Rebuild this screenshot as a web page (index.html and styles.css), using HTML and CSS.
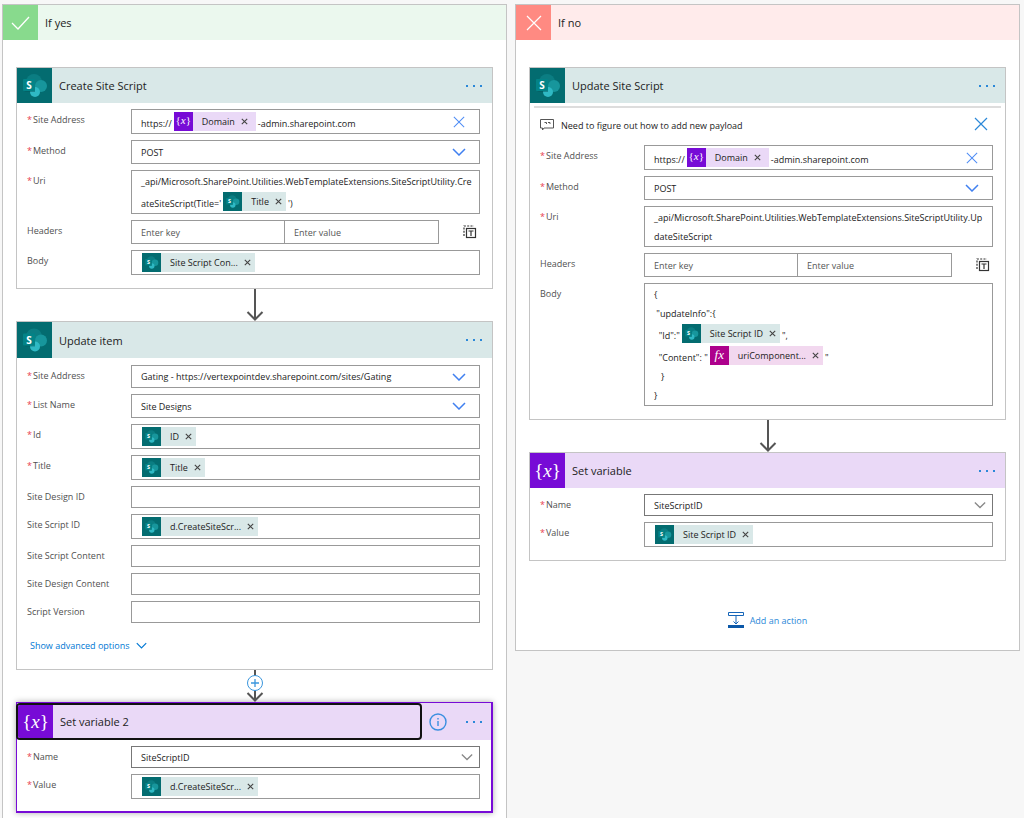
FILE: index.html
```html
<!DOCTYPE html>
<html lang="en">
<head>
<meta charset="utf-8">
<title>Flow condition</title>
<link rel="stylesheet" href="styles.css">
</head>
<body>
<svg class="defs" aria-hidden="true">
  <symbol id="sharepoint" viewBox="0 0 35 35">
    <rect width="35" height="35" fill="#036c70"/>
    <circle cx="17" cy="14" r="8" fill="#0b7d82"/>
    <circle cx="24" cy="18" r="6" fill="#17969c"/>
    <circle cx="18" cy="24" r="5" fill="#2fb9c4"/>
    <path d="M7 12h11v12H9l-2-1z" fill="#04585b" opacity=".5"/>
    <rect x="6" y="11" width="12" height="12" rx="1" fill="#038387"/>
    <text x="12" y="21" text-anchor="middle" font-family="Open Sans, sans-serif" font-weight="700" font-size="10" fill="#fff">S</text>
  </symbol>
  <symbol id="chevron" viewBox="0 0 14 8"><path d="M1 1l6 6 6-6" fill="none" stroke="currentColor" stroke-width="1.5"/></symbol>
  <symbol id="cross" viewBox="0 0 14 14"><path d="M1 1l12 12M13 1L1 13" fill="none" stroke="currentColor" stroke-width="1.2"/></symbol>
  <symbol id="x" viewBox="0 0 7 7"><path d="M.8.8l5.400 5.400M6.200.8L.8 6.200" fill="none" stroke="currentColor" stroke-width="1.1"/></symbol>
  <symbol id="dots" viewBox="0 0 18 4"><path d="M1 1h2v2H1zM8 1h2v2H8zM15 1h2v2h-2z" fill="currentColor"/></symbol>
  <symbol id="arrow" viewBox="0 0 18 32"><path d="M9 0v30M1.5 23L9 30.500 16.500 23" fill="none" stroke="#555" stroke-width="2"/></symbol>
  <symbol id="switch" viewBox="0 0 14 14">
    <path d="M1 11V1h10" fill="none" stroke="#333" stroke-width="1.2" stroke-dasharray="2 1.300"/>
    <rect x="3.500" y="3.500" width="9" height="9" fill="#fff" stroke="#333" stroke-width="1.200"/>
    <path d="M5.500 6h5M8 6v5" stroke="#333" stroke-width="1.200"/>
  </symbol>
</svg>

<main class="branches">
  <section class="branch branch-yes">
    <header class="branch-head">
      <span class="branch-icon"><svg width="19" height="14" viewBox="0 0 19 14" aria-hidden="true"><path d="M1 7l6 6L18 1" fill="none" stroke="#fff" stroke-width="1.300"/></svg></span>
      <h2>If yes</h2>
    </header>
    <div class="steps">

      <article class="card teal">
        <header class="card-head">
          <svg class="card-icon" aria-hidden="true"><use href="#sharepoint"/></svg>
          <h3>Create Site Script</h3>
          <button class="more" aria-label="More"><svg><use href="#dots"/></svg></button>
        </header>
        <div class="card-body">
          <div class="row"><span class="label req" id="a1">Site Address</span>
            <div class="box rich" role="textbox" aria-labelledby="a1"><p class="mix"><span>https://</span><span class="chip var"><span class="ico">{<i>x</i>}</span>Domain<button aria-label="Remove"><svg><use href="#x"/></svg></button></span><span>-admin.sharepoint.com</span></p>
              <button class="clear" aria-label="Clear"><svg><use href="#cross"/></svg></button></div></div>
          <div class="row"><label class="label req" for="a2">Method</label>
            <div class="pick"><select class="box tall" id="a2"><option>POST</option></select><svg><use href="#chevron"/></svg></div></div>
          <div class="row"><span class="label req" id="a3">Uri</span>
            <div class="box rich" role="textbox" aria-labelledby="a3"><p>_api/Microsoft.SharePoint.Utilities.WebTemplateExtensions.SiteScriptUtility.Cre</p><p class="mix"><span>ateSiteScript(Title='</span><span class="chip"><svg class="ico"><use href="#sharepoint"/></svg>Title<button aria-label="Remove"><svg><use href="#x"/></svg></button></span><span>')</span></p></div></div>
          <div class="row"><span class="label">Headers</span>
            <div class="pairs"><input class="box tall" aria-label="Header key" placeholder="Enter key"><input class="box tall" aria-label="Header value" placeholder="Enter value"><button class="switch" aria-label="Switch to text mode"><svg><use href="#switch"/></svg></button></div></div>
          <div class="row"><span class="label" id="a5">Body</span>
            <div class="box rich" role="textbox" aria-labelledby="a5"><p class="mix"><span class="chip"><svg class="ico"><use href="#sharepoint"/></svg>Site Script Con...<button aria-label="Remove"><svg><use href="#x"/></svg></button></span></p></div></div>
        </div>
      </article>

      <div class="connector"><svg><use href="#arrow"/></svg></div>

      <article class="card teal roomy">
        <header class="card-head">
          <svg class="card-icon" aria-hidden="true"><use href="#sharepoint"/></svg>
          <h3>Update item</h3>
          <button class="more" aria-label="More"><svg><use href="#dots"/></svg></button>
        </header>
        <div class="card-body">
          <div class="row"><label class="label req" for="b1">Site Address</label>
            <div class="pick"><select class="box medium" id="b1"><option>Gating - https://vertexpointdev.sharepoint.com/sites/Gating</option></select><svg><use href="#chevron"/></svg></div></div>
          <div class="row"><label class="label req" for="b2">List Name</label>
            <div class="pick"><select class="box tall" id="b2"><option>Site Designs</option></select><svg><use href="#chevron"/></svg></div></div>
          <div class="row"><span class="label req" id="b3">Id</span>
            <div class="box rich" role="textbox" aria-labelledby="b3"><p class="mix"><span class="chip"><svg class="ico"><use href="#sharepoint"/></svg>ID<button aria-label="Remove"><svg><use href="#x"/></svg></button></span></p></div></div>
          <div class="row"><span class="label req" id="b4">Title</span>
            <div class="box rich" role="textbox" aria-labelledby="b4"><p class="mix"><span class="chip"><svg class="ico"><use href="#sharepoint"/></svg>Title<button aria-label="Remove"><svg><use href="#x"/></svg></button></span></p></div></div>
          <div class="row"><label class="label" for="b5">Site Design ID</label><input class="box" id="b5"></div>
          <div class="row"><span class="label" id="b6">Site Script ID</span>
            <div class="box rich" role="textbox" aria-labelledby="b6"><p class="mix"><span class="chip"><svg class="ico"><use href="#sharepoint"/></svg>d.CreateSiteScr...<button aria-label="Remove"><svg><use href="#x"/></svg></button></span></p></div></div>
          <div class="row"><label class="label" for="b7">Site Script Content</label><input class="box" id="b7"></div>
          <div class="row"><label class="label" for="b8">Site Design Content</label><input class="box" id="b8"></div>
          <div class="row"><label class="label" for="b9">Script Version</label><input class="box" id="b9"></div>
          <a class="advanced" href="#">Show advanced options <svg><use href="#chevron"/></svg></a>
        </div>
      </article>

      <div class="connector"><svg><use href="#arrow"/></svg>
        <button class="insert" aria-label="Insert a step"><svg viewBox="0 0 18 18"><circle cx="9" cy="9" r="7.500" fill="#fff" stroke="#3a96dd"/><path d="M9 5v8M5 9h8" stroke="#3a96dd" stroke-width="1.300"/></svg></button></div>

      <article class="card violet selected">
        <header class="card-head">
          <div class="head-focus"><span class="card-icon fx">{<i>x</i>}</span><h3>Set variable 2</h3></div>
          <button class="info" aria-label="Information"><svg viewBox="0 0 18 18"><circle cx="9" cy="9" r="8" fill="none" stroke="#3a8fe0" stroke-width="1.400"/><path d="M9 8v5M9 5v1.500" stroke="#3a8fe0" stroke-width="1.400"/></svg></button>
          <button class="more" aria-label="More"><svg><use href="#dots"/></svg></button>
        </header>
        <div class="card-body">
          <div class="row"><label class="label req" for="c1">Name</label>
            <div class="pick quiet"><select class="box" id="c1"><option>SiteScriptID</option></select><svg><use href="#chevron"/></svg></div></div>
          <div class="row"><span class="label req" id="c2">Value</span>
            <div class="box rich" role="textbox" aria-labelledby="c2"><p class="mix"><span class="chip"><svg class="ico"><use href="#sharepoint"/></svg>d.CreateSiteScr...<button aria-label="Remove"><svg><use href="#x"/></svg></button></span></p></div></div>
        </div>
      </article>
    </div>
  </section>

  <section class="branch branch-no">
    <header class="branch-head">
      <span class="branch-icon"><svg width="16" height="16" viewBox="0 0 16 16" aria-hidden="true"><path d="M1 1l14 14M15 1L1 15" fill="none" stroke="#fff" stroke-width="1.200"/></svg></span>
      <h2>If no</h2>
    </header>
    <div class="steps">

      <article class="card teal">
        <header class="card-head">
          <svg class="card-icon" aria-hidden="true"><use href="#sharepoint"/></svg>
          <h3>Update Site Script</h3>
          <button class="more" aria-label="More"><svg><use href="#dots"/></svg></button>
        </header>
        <div class="note">
          <svg class="note-icon" viewBox="0 0 14 12" aria-hidden="true"><path d="M.5.5h13v8.500H4L2.500 11V9h-2z" fill="none" stroke="#555"/><path d="M4.500 3.500h2v1.500M8 3.500h2v1.500" fill="none" stroke="#555"/></svg>
          <p>Need to figure out how to add new payload</p>
          <button aria-label="Delete note"><svg><use href="#cross"/></svg></button>
        </div>
        <div class="card-body">
          <div class="row"><span class="label req" id="d1">Site Address</span>
            <div class="box rich" role="textbox" aria-labelledby="d1"><p class="mix"><span>https://</span><span class="chip var"><span class="ico">{<i>x</i>}</span>Domain<button aria-label="Remove"><svg><use href="#x"/></svg></button></span><span>-admin.sharepoint.com</span></p>
              <button class="clear" aria-label="Clear"><svg><use href="#cross"/></svg></button></div></div>
          <div class="row"><label class="label req" for="d2">Method</label>
            <div class="pick"><select class="box tall" id="d2"><option>POST</option></select><svg><use href="#chevron"/></svg></div></div>
          <div class="row"><span class="label req" id="d3">Uri</span>
            <div class="box rich" role="textbox" aria-labelledby="d3"><p>_api/Microsoft.SharePoint.Utilities.WebTemplateExtensions.SiteScriptUtility.Up</p><p>dateSiteScript</p></div></div>
          <div class="row"><span class="label">Headers</span>
            <div class="pairs"><input class="box tall" aria-label="Header key" placeholder="Enter key"><input class="box tall" aria-label="Header value" placeholder="Enter value"><button class="switch" aria-label="Switch to text mode"><svg><use href="#switch"/></svg></button></div></div>
          <div class="row"><span class="label" id="d5">Body</span>
            <div class="box rich" role="textbox" aria-labelledby="d5"><p>{</p><p> "updateInfo":{</p><p class="mix"><span>  "Id":"</span><span class="chip"><svg class="ico"><use href="#sharepoint"/></svg>Site Script ID<button aria-label="Remove"><svg><use href="#x"/></svg></button></span><span>",</span></p><p class="mix"><span>  "Content": "</span><span class="chip expr"><span class="ico"><i>fx</i></span>uriComponent...<button aria-label="Remove"><svg><use href="#x"/></svg></button></span><span>"</span></p><p>   }</p><p>}</p></div></div>
        </div>
      </article>

      <div class="connector"><svg><use href="#arrow"/></svg></div>

      <article class="card violet">
        <header class="card-head">
          <span class="card-icon fx">{<i>x</i>}</span>
          <h3>Set variable</h3>
          <button class="more" aria-label="More"><svg><use href="#dots"/></svg></button>
        </header>
        <div class="card-body">
          <div class="row"><label class="label req" for="e1">Name</label>
            <div class="pick quiet"><select class="box" id="e1"><option>SiteScriptID</option></select><svg><use href="#chevron"/></svg></div></div>
          <div class="row"><span class="label req" id="e2">Value</span>
            <div class="box rich" role="textbox" aria-labelledby="e2"><p class="mix"><span class="chip"><svg class="ico"><use href="#sharepoint"/></svg>Site Script ID<button aria-label="Remove"><svg><use href="#x"/></svg></button></span></p></div></div>
        </div>
      </article>

      <button class="add"><svg viewBox="0 0 16 16" aria-hidden="true"><path d="M.5.5h15v3H.5zM8 4v8M5.500 9.500L8 12l2.500-2.500" fill="none" stroke="#1565b8"/><path d="M0 13h16v3H0z" fill="#0b58a8"/></svg>Add an action</button>
    </div>
  </section>
</main>
</body>
</html>
```

FILE: styles.css
```css
* { box-sizing: border-box; }

body {
  margin: 0;
  background: #f7f7f7;
  color: #222;
  font: 9px/19px "Open Sans", "Noto Sans", sans-serif;
}

h2, h3, p { margin: 0; font-weight: 400; }

button, input, select { font: inherit; color: inherit; }

button {
  display: flex;
  align-items: center;
  justify-content: center;
  padding: 0;
  border: 0;
  background: none;
  color: #2b88d8;
  cursor: pointer;
}

svg { display: block; flex: none; }

.defs { display: none; }

.branches {
  display: grid;
  grid-template-columns: 1fr 1fr;
  gap: 8px;
  align-items: start;
  min-height: 100vh;
  padding: 4px 4px 0 2px;
}

.branch { min-width: 0; border: 1px solid #c4c4c4; background: #fff; }
.branch-yes { align-self: stretch; border-bottom: 0; }

.branch-head { display: flex; align-items: center; gap: 7px; height: 35px; }
.branch-head h2 { font-size: 11px; }
.branch-yes .branch-head { background: #ebf8ee; }
.branch-no .branch-head { background: #ffebeb; }

.branch-icon { display: flex; align-items: center; justify-content: center; width: 35px; height: 35px; }
.branch-yes .branch-icon { background: #88da8d; }
.branch-no .branch-icon { background: #ff8a82; }

.steps { display: flex; flex-direction: column; padding: 27px 13px 7px; }
.branch-no .steps { padding-bottom: 19px; }

.card { border: 1px solid #c4c4c4; background: #fff; }

.card-head { display: flex; align-items: center; gap: 7px; height: 35px; padding-right: 9px; }
.card-head h3 { flex: 1; font-size: 11px; }
.teal .card-head { background: #d9e8e8; }
.violet .card-head { background: #ead9f7; }
.card-icon { width: 35px; height: 35px; flex: none; }

.fx {
  display: flex;
  align-items: center;
  justify-content: center;
  background: #770bd6;
  color: #fff;
  font: 19px/32px "Liberation Serif", serif;
}

.more svg { width: 18px; height: 4px; }

.roomy .card-head { height: 36px; }
.roomy .card-icon { height: 36px; background: #036c70; }
.roomy .card-body { padding-top: 7px; padding-bottom: 14px; }

.card-body { display: flex; flex-direction: column; gap: 6px; padding: 6px 12px 13px 10px; }

.row { display: grid; grid-template-columns: 104px minmax(0, 1fr); align-items: start; }

.label { color: #505050; line-height: 21px; white-space: nowrap; }
.req::before { content: "*"; margin-right: 1px; color: #e8414d; }

.box {
  width: 100%;
  height: 22px;
  padding: 0 9px;
  border: 1px solid #999;
  border-radius: 0;
  background: #fff;
}
.medium { height: 23px; }
.tall { height: 24px; }
input::placeholder { color: #555; opacity: 1; }

.rich { position: relative; height: auto; padding-top: 1px; }
.rich p { white-space: pre; }

.mix { display: flex; align-items: flex-start; gap: 2px; height: 22px; }
.mix > span:not(.chip) { align-self: flex-end; }

.chip {
  display: flex;
  align-items: center;
  height: 19px;
  margin-top: 1px;
  padding-right: 4px;
  background: #d9e8e8;
}
.chip:first-child { margin-left: 1px; }
.chip .ico { width: 19px; height: 19px; margin-right: 9px; }
.chip span.ico {
  background: #770bd6;
  color: #fff;
  font: 11px/17px "Liberation Serif", serif;
  text-align: center;
}
.chip button { width: 7px; height: 7px; margin-left: 6px; color: #444; }
.chip button svg { width: 7px; height: 7px; }
.chip.var { padding-right: 8px; background: #ead9f7; }
.chip.expr { background: #f2d8ef; }
.chip.expr span.ico { background: #ad008c; font-size: 13px; }

.clear { position: absolute; top: 0; right: 14px; width: 12px; height: 23px; color: #4f8df5; }
.clear svg { width: 12px; height: 12px; }

.pick { position: relative; }
.pick select { display: block; appearance: none; }
.pick svg { position: absolute; top: 50%; right: 14px; width: 14px; height: 8px; margin-top: -4px; color: #4080f0; pointer-events: none; }
.quiet svg { right: 7px; width: 12px; color: #888; }
.quiet select { border-color: #777; }

.pairs { display: grid; grid-template-columns: 1fr 1fr 41px; align-items: center; }
.pairs input + input { border-left: 0; }
.switch { justify-self: end; margin-right: 3px; }
.switch svg { width: 14px; height: 14px; }

.advanced {
  display: flex;
  align-items: center;
  gap: 6px;
  height: 20px;
  margin: 6px 0 0 3px;
  color: #0078d4;
  text-decoration: none;
}
.advanced svg { width: 11px; height: 7px; }

.connector { position: relative; display: flex; justify-content: center; height: 32px; }
.connector svg { width: 18px; height: 32px; }
.insert { position: absolute; top: 4px; }
.insert svg { width: 18px; height: 18px; }

.selected { border: 2px solid #770bd6; border-width: 1px 2px 2px 1px; box-shadow: 0 0 6px #aaa; }
.selected .card-head { gap: 0; padding-right: 8px; height: 37px; }
.selected .card-body { padding-right: 11px; padding-bottom: 12px; }
.head-focus {
  display: flex;
  flex: 1;
  align-items: center;
  gap: 7px;
  height: 37px;
  margin-left: -1px;
  border: 2px solid #111;
  border-radius: 4px;
  overflow: hidden;
}
.info { width: 32px; margin-right: 11px; }
.info svg { width: 18px; height: 18px; }

.note {
  display: flex;
  align-items: center;
  gap: 7px;
  margin: 3px 4px 0;
  padding: 2px 13px 0 6px;
  height: 33px;
  border-top: 2px solid #ddd;
}
.note + .card-body { padding-top: 6px; }
.note-icon { width: 14px; height: 12px; }
.note p { flex: 1; padding-top: 1px; }
.note button { align-self: flex-start; margin-top: 7px; }
.note button svg { width: 14px; height: 14px; }

.add { align-self: center; gap: 6px; margin-top: 48px; height: 22px; }
.add svg { width: 16px; height: 16px; }
```
